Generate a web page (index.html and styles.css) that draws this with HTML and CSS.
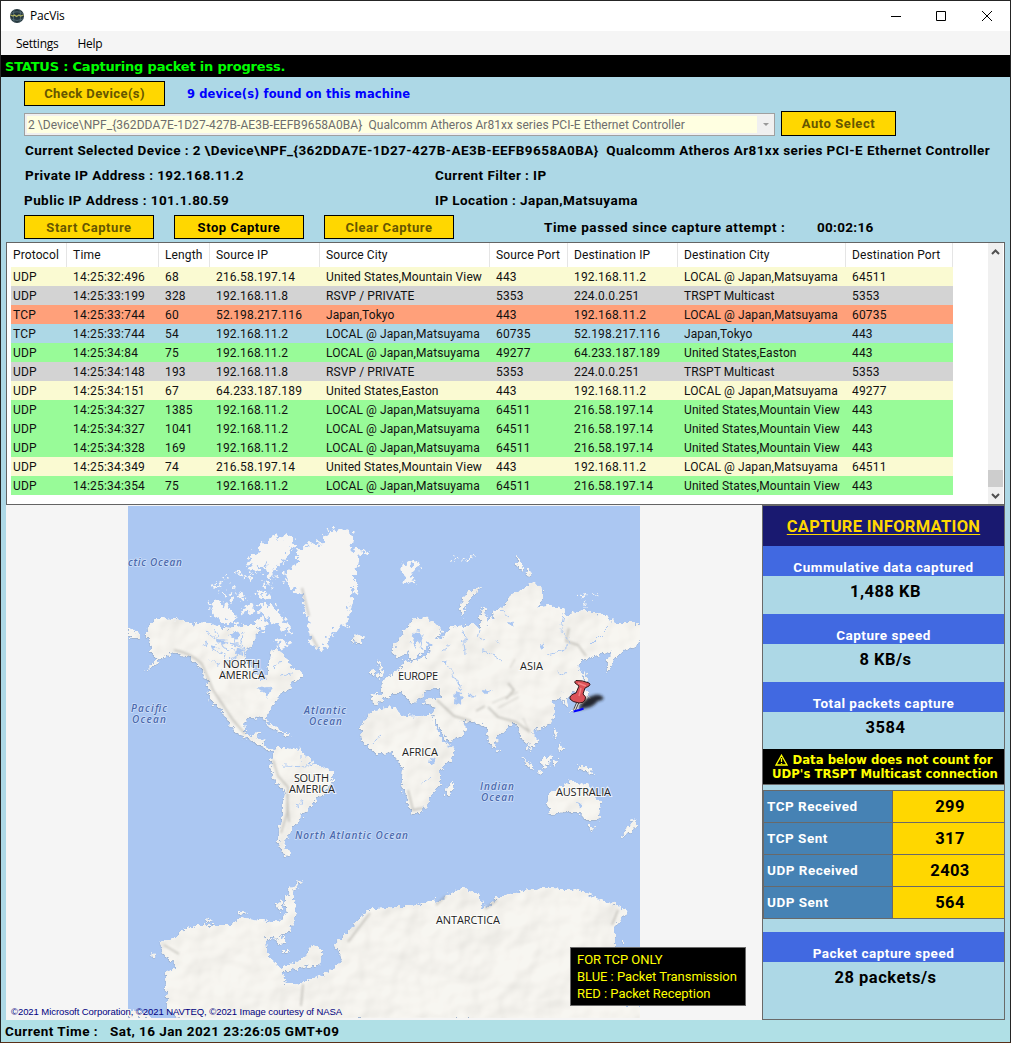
FILE: index.html
```html
<!DOCTYPE html>
<html lang="en">
<head>
<meta charset="utf-8">
<title>PacVis</title>
<link rel="stylesheet" href="styles.css">
</head>
<body>
<div class="window">
  <header class="titlebar">
    <svg class="logo" width="16" height="16" viewBox="0 0 16 16"><circle cx="8" cy="8" r="7" fill="#26383f"/><path d="M2 5.500Q8 2 14 5.500M2 11Q8 14 14 11M5 2Q3.500 8 5 14M11 2Q12.500 8 11 14" fill="none" stroke="#587078" stroke-width=".8"/><path d="M1.500 7l2.500 1 1.500-1 2 1.500L10 7l1.500 1 3-1" fill="none" stroke="#aeb05e" stroke-width="1.300"/></svg>
    <span class="app-name">PacVis</span>
    <svg class="controls" width="102" height="12" viewBox="0 0 102 12" fill="none" stroke="#000"><path d="M0 6.500h10M45.500 1.500h9v9h-9zM91 1l10 10M101 1L91 11"/></svg>
  </header>
  <nav class="menu"><span>Settings</span><span>Help</span></nav>
  <div class="status">STATUS : Capturing packet in progress.</div>

  <section class="controls-panel">
    <div class="row row-check">
      <button class="btn off wide">Check Device(s)</button>
      <span class="found">9 device(s) found on this machine</span>
    </div>
    <div class="row row-select">
      <div class="combo"><span class="combo-text">2 \Device\NPF_{362DDA7E-1D27-427B-AE3B-EEFB9658A0BA}&nbsp; Qualcomm Atheros Ar81xx series PCI-E Ethernet Controller</span><i class="caret"></i></div>
      <button class="btn off auto">Auto Select</button>
    </div>
    <div class="info device">Current Selected Device : 2 \Device\NPF_{362DDA7E-1D27-427B-AE3B-EEFB9658A0BA}&nbsp; Qualcomm Atheros Ar81xx series PCI-E Ethernet Controller</div>
    <div class="info pair"><span>Private IP Address : 192.168.11.2</span><span>Current Filter : IP</span></div>
    <div class="info pair second"><span>Public IP Address : 101.1.80.59</span><span>IP Location : Japan,Matsuyama</span></div>
    <div class="row row-capture">
      <button class="btn off">Start Capture</button>
      <button class="btn">Stop Capture</button>
      <button class="btn off">Clear Capture</button>
      <span class="elapsed-label">Time passed since capture attempt :</span><span class="elapsed">00:02:16</span>
    </div>
  </section>

  <section class="packets">
    <div class="grid">
      <div class="tr th"><span>Protocol</span><span>Time</span><span>Length</span><span>Source IP</span><span>Source City</span><span>Source Port</span><span>Destination IP</span><span>Destination City</span><span>Destination Port</span></div>
      <div class="tr cream"><span>UDP</span><span>14:25:32:496</span><span>68</span><span>216.58.197.14</span><span>United States,Mountain View</span><span>443</span><span>192.168.11.2</span><span>LOCAL @ Japan,Matsuyama</span><span>64511</span></div>
      <div class="tr gray"><span>UDP</span><span>14:25:33:199</span><span>328</span><span>192.168.11.8</span><span>RSVP / PRIVATE</span><span>5353</span><span>224.0.0.251</span><span>TRSPT Multicast</span><span>5353</span></div>
      <div class="tr salmon"><span>TCP</span><span>14:25:33:744</span><span>60</span><span>52.198.217.116</span><span>Japan,Tokyo</span><span>443</span><span>192.168.11.2</span><span>LOCAL @ Japan,Matsuyama</span><span>60735</span></div>
      <div class="tr blue"><span>TCP</span><span>14:25:33:744</span><span>54</span><span>192.168.11.2</span><span>LOCAL @ Japan,Matsuyama</span><span>60735</span><span>52.198.217.116</span><span>Japan,Tokyo</span><span>443</span></div>
      <div class="tr green"><span>UDP</span><span>14:25:34:84</span><span>75</span><span>192.168.11.2</span><span>LOCAL @ Japan,Matsuyama</span><span>49277</span><span>64.233.187.189</span><span>United States,Easton</span><span>443</span></div>
      <div class="tr gray"><span>UDP</span><span>14:25:34:148</span><span>193</span><span>192.168.11.8</span><span>RSVP / PRIVATE</span><span>5353</span><span>224.0.0.251</span><span>TRSPT Multicast</span><span>5353</span></div>
      <div class="tr cream"><span>UDP</span><span>14:25:34:151</span><span>67</span><span>64.233.187.189</span><span>United States,Easton</span><span>443</span><span>192.168.11.2</span><span>LOCAL @ Japan,Matsuyama</span><span>49277</span></div>
      <div class="tr green"><span>UDP</span><span>14:25:34:327</span><span>1385</span><span>192.168.11.2</span><span>LOCAL @ Japan,Matsuyama</span><span>64511</span><span>216.58.197.14</span><span>United States,Mountain View</span><span>443</span></div>
      <div class="tr green"><span>UDP</span><span>14:25:34:327</span><span>1041</span><span>192.168.11.2</span><span>LOCAL @ Japan,Matsuyama</span><span>64511</span><span>216.58.197.14</span><span>United States,Mountain View</span><span>443</span></div>
      <div class="tr green"><span>UDP</span><span>14:25:34:328</span><span>169</span><span>192.168.11.2</span><span>LOCAL @ Japan,Matsuyama</span><span>64511</span><span>216.58.197.14</span><span>United States,Mountain View</span><span>443</span></div>
      <div class="tr cream"><span>UDP</span><span>14:25:34:349</span><span>74</span><span>216.58.197.14</span><span>United States,Mountain View</span><span>443</span><span>192.168.11.2</span><span>LOCAL @ Japan,Matsuyama</span><span>64511</span></div>
      <div class="tr green"><span>UDP</span><span>14:25:34:354</span><span>75</span><span>192.168.11.2</span><span>LOCAL @ Japan,Matsuyama</span><span>64511</span><span>216.58.197.14</span><span>United States,Mountain View</span><span>443</span></div>
    </div>
    <div class="scroll">
      <svg width="9" height="6" viewBox="0 0 9 6"><path d="M1 5l3.500-3.500L8 5" fill="none" stroke="#505050" stroke-width="2"/></svg>
      <i class="thumb"></i>
      <svg width="9" height="6" viewBox="0 0 9 6"><path d="M1 1l3.500 3.500L8 1" fill="none" stroke="#505050" stroke-width="2"/></svg>
    </div>
  </section>

  <main class="lower">
    <section class="map-area">
      <svg class="map" width="512" height="512" viewBox="128 506 512 512">
        <defs>
          <filter id="coast" x="128" y="506" width="512" height="512" filterUnits="userSpaceOnUse" color-interpolation-filters="sRGB">
            <feTurbulence type="fractalNoise" baseFrequency=".24" numOctaves="3" seed="4" result="n"/>
            <feDisplacementMap in="SourceGraphic" in2="n" scale="8" xChannelSelector="R" yChannelSelector="G" result="land"/>
            <feTurbulence type="fractalNoise" baseFrequency=".025" numOctaves="3" seed="9" result="h"/>
            <feDiffuseLighting in="h" surfaceScale="5" diffuseConstant="1.100" lighting-color="#fff" result="lit"><feDistantLight azimuth="230" elevation="58"/></feDiffuseLighting>
            <feColorMatrix in="lit" type="matrix" values=".16 0 0 0 .81  0 .16 0 0 .807  0 0 .16 0 .795  0 0 0 1 0" result="tone"/>
            <feComposite in="tone" in2="land" operator="in" result="relief"/>
            <feBlend in="relief" in2="land" mode="multiply" result="body"/>
            <feDropShadow in="land" dx="-.3" dy=".6" stdDeviation=".6" flood-color="#8d8f90" flood-opacity=".55" result="edge"/>
            <feMerge><feMergeNode in="edge"/><feMergeNode in="body"/></feMerge>
          </filter>
          <filter id="arctic" x="128" y="506" width="512" height="170" filterUnits="userSpaceOnUse" color-interpolation-filters="sRGB">
            <feTurbulence type="fractalNoise" baseFrequency=".2" numOctaves="3" seed="12" result="n"/>
            <feDisplacementMap in="SourceGraphic" in2="n" scale="15" xChannelSelector="R" yChannelSelector="G"/>
          </filter>
          <filter id="rough" x="128" y="506" width="512" height="512" filterUnits="userSpaceOnUse">
            <feTurbulence type="fractalNoise" baseFrequency=".16" numOctaves="2" seed="7" result="n"/>
            <feDisplacementMap in="SourceGraphic" in2="n" scale="9" xChannelSelector="R" yChannelSelector="G"/>
          </filter>
          <filter id="soft"><feGaussianBlur stdDeviation="1.200"/></filter>
          <filter id="shade" x="-30%" y="-30%" width="160%" height="160%"><feGaussianBlur stdDeviation="1.500"/></filter>
        </defs>
        <rect x="128" y="506" width="512" height="512" fill="#abc7f2"/>
        <g fill="#fffefc" filter="url(#coast)">
          <path d="M148 627L157 618 183 620 193 625 203 622 220 627 230 628 247 625 257 625 258 633 253 643 246 651 246 662 254 672 262 681 268 681 267 670 270 661 272 650 282 651 287 660 292 668 302 671 303 677 290 683 291 689 280 693 275 703 266 714 268 724 263 717 248 718 244 723 245 733 252 737 257 731 260 732 256 739 264 741 264 746 276 751 270 752 260 745 247 739 237 733 230 725 220 708 210 700 208 683 200 667 190 657 173 652 163 657 145 672 157 658 150 650 152 643 147 637Z"/>
          <path d="M353 638L359 635 364 638 359 643 354 642ZM128 627L137 632 139 638 131 638 128 634Z"/>
          <path d="M277 747L293 748 303 753 312 760 313 765 323 767 334 772 332 780 323 795 315 800 307 812 301 813 303 818 295 823 290 833 284 843 290 855 282 852 278 840 281 820 285 793 273 777 270 767 272 757Z"/>
          <path d="M266 723L276 727 284 733 278 731 268 726ZM285 733L292 735 286 736ZM297 747L300 749 298 751Z"/>
          <path d="M371 700L372 695 381 694 382 682 393 673 403 667 405 660 410 664 423 658 431 652 428 646 421 653 414 660 409 660 410 650 404 655 396 657 392 650 403 633 413 620 425 617 437 625 442 633 435 636 441 640 450 628 460 627 473 623 480 630 480 610 485 607 488 627 493 613 507 603 510 595 527 588 532 582 543 588 543 600 535 607 550 605 563 610 565 616 583 610 610 617 613 623 640 623 640 637 637 645 623 650 615 658 607 673 607 660 612 650 597 655 583 660 577 667 583 677 580 687 572 693 567 700 568 707 565 706 562 698 552 700 555 710 553 720 542 728 532 730 538 742 532 747 527 740 531 752 526 744 519 732 517 722 507 727 497 737 494 749 488 737 487 727 478 723 460 720 468 730 460 737 448 742 437 723 433 715 435 707 423 703 427 698 442 698 438 689 429 688 424 694 417 700 413 703 403 693 393 693 382 700 375 705Z"/>
          <path d="M375 710L397 707 400 715 410 717 432 715 435 727 445 745 456 747 450 760 440 770 440 785 430 795 428 803 420 813 412 813 405 793 402 783 403 770 398 760 393 752 375 753 362 740 361 727 367 717ZM447 787L453 781 453 788 450 797 446 797Z"/>
          <path d="M547 795L560 788 567 783 573 780 580 787 587 782 592 793 601 803 598 820 585 820 578 812 563 812 550 814ZM590 826L595 827 592 831ZM633 819L637 824 631 831 622 837 626 830 631 826ZM577 766L586 766 595 774 588 773ZM540 762L550 755 549 765 543 767ZM522 756L528 762 534 769 529 767ZM536 771L543 772 542 774ZM554 727L557 734 555 738ZM560 743L563 751 558 749ZM553 760L558 759 555 767ZM583 688L589 694 586 702 577 710 569 712 578 705ZM585 670L588 678 587 688 584 681ZM497 749L499 752 496 752Z"/>
          <path d="M462 617L460 605 468 592 482 587 470 598 464 609ZM377 658L381 666 384 675 377 678 380 669ZM372 669L376 671 374 675 371 675ZM517 555L521 563 524 570 517 566ZM526 569L532 572 529 577Z"/>
          <path d="M180 1018L168 1010 165 973 178 967 163 953 160 942 175 938 183 930 200 925 230 925 243 918 260 920 280 922 287 913 285 900 292 887 302 880 293 892 296 913 290 930 280 937 265 938 268 957 280 968 300 960 313 945 322 950 320 965 297 968 282 973 285 983 300 985 303 982 323 975 342 962 340 950 333 947 347 933 368 910 397 907 410 907 433 900 437 903 460 888 480 895 483 910 497 898 517 892 543 888 580 890 600 900 617 905 627 912 615 927 615 947 619 980 622 1005 641 1005 641 1020 180 1020ZM276 939L286 937 286 943 279 945ZM151 951L156 957 152 958ZM128 1008L145 1012 151 1018 128 1018ZM281 950L289 950 284 953ZM204 919L213 921 207 922ZM240 912L246 913 242 915ZM282 850L290 854 286 856ZM620 942L624 942 622 944ZM277 904L282 901 282 912 278 908Z"/>
        </g>
        <g fill="#f6f5f3" filter="url(#arctic)">
          <path d="M284 575L297 562 297 551 307 543 320 544 327 533 338 528 350 533 353 538 350 548 367 550 360 557 355 570 355 587 350 610 348 623 333 633 322 650 313 647 310 637 305 610 302 593 287 585Z"/>
          <path d="M248 563L257 550 273 535 293 537 294 545 287 557 276 569 272 580 265 575 267 563 258 573 250 571ZM258 603L273 605 283 617 292 630 287 634 276 623 263 616ZM207 602L217 600 230 608 237 623 223 622 210 612ZM276 637L290 645 286 648 276 643ZM247 603L254 608 250 615 242 612ZM257 618L266 620 265 631 257 628ZM255 592L270 594 268 599 257 597ZM236 593L248 596 242 600ZM219 591L232 595 228 600ZM242 577L254 575 252 580ZM260 583L272 585 266 589ZM236 570L243 572 238 576ZM214 583L222 585 216 589ZM223 577L228 577 225 580ZM230 586L236 585 235 589Z"/>
          <path d="M401 567L409 563 421 564 419 569 411 571 415 581 406 583ZM579 592L589 595 582 597ZM593 594L597 596 593 597ZM450 559L457 557 453 561ZM464 558L476 555 468 562ZM583 603L587 604 585 606Z"/>
        </g>
        <g fill="none" stroke="#8d8b83" opacity=".4" filter="url(#soft)" stroke-width="2">
          <path d="M174 650q17 3 28 14l11 26 20 30 12 14M273 760l5 16 10 11-1 26-6 20M287 794l2 28M437 700l17 16 17 5M488 707l10 10 18 5 14 10M508 683l6 7-8 9M476 711l9-5M569 628l-3 13 12 4 8 11M408 790l5 20 10-2M164 945l15 9M348 942l22-29M303 984l-2 22M436 905l10-9M485 909l12-9M618 910l-6 15M311 635l7 13M302 588l7 28"/>
          <path d="M492 703l26-11M498 708l21-11M515 659l-5 9M523 718l6 13" stroke-width="1"/>
        </g>
        <g fill="none" stroke="#abc7f2" stroke-width="1" filter="url(#rough)">
          <path d="M285 765l24 1 5-3M295 803l6 5M303 799l-4 6M301 754v6M313 760l-4 4M372 743l10-8M421 785l10-8M480 630l-2 7 7 4M483 651l9 2 10 7M564 614l-3 15 10 14-10 9-15 3M556 671l9 5M590 645l18-18M463 630l2 25M448 665l14 25M230 643l14 5 2 9M205 631l10 8 8 1M215 632l8 16 12 1M212 651l10 3M224 655l10 8M222 671l8 3M244 632l-4 12M258 634l-2 11M210 659l10 6M495 640l5 3M500 610l8 6M560 690l5 3M234 630l3 13M218 643l24 1M241 653l-12 8M256 660l-8-3M282 660l-8 9M292 674l-12 2M208 640l-4 7M467 638l-7 3M424 632l-5 8 3 10M450 645l-8 6"/>
        </g>
        <g fill="#abc7f2" filter="url(#rough)">
          <path d="M256 688l10-3 6 5-6 8-3-7zM217 640l9 1-3 5zM229 634l7-2 4 6-6 1zM211 645l7 2-5 4zM430 759l5 1-2 5h-4zM508 621l8 1-4 5zM538 643l7 1-4 5zM456 690l6 3-1 12-6-2zM468 693l6 1-4 4zM578 803l5 2-4 3zM484 690l7 1-5 3zM443 661l6 1-5 4zM237 648l8 2-3 6-6-3zM414 633l7-4-1 10-6 8-2-6zM425 642l9 3-5 3z"/>
        </g>
        <g class="land-label">
          <text x="223" y="668" textLength="37">NORTH</text><text x="219" y="679" textLength="46">AMERICA</text>
          <text x="294" y="782" textLength="35">SOUTH</text><text x="289" y="793" textLength="46">AMERICA</text>
          <text x="398" y="680" textLength="40">EUROPE</text><text x="520" y="670" textLength="23">ASIA</text>
          <text x="402" y="756" textLength="36">AFRICA</text><text x="556" y="796" textLength="55">AUSTRALIA</text>
          <text x="436" y="924" textLength="64">ANTARCTICA</text>
        </g>
        <g class="sea-label">
          <text x="128" y="566" textLength="54">ctic Ocean</text>
          <text x="131" y="712" textLength="36">Pacific</text><text x="132" y="723" textLength="34">Ocean</text>
          <text x="304" y="714" textLength="42">Atlantic</text><text x="309" y="725" textLength="33">Ocean</text>
          <text x="480" y="790" textLength="34">Indian</text><text x="481" y="801" textLength="33">Ocean</text>
          <text x="295" y="839" textLength="113">North Atlantic Ocean</text>
        </g>
        <path d="M578 710Q583 698 592 696q7-3 11 1 2 3-5 4-6 7-12 7z" fill="#14181e" opacity=".9" filter="url(#shade)"/>
        <path d="M578 702l-3.500 8" stroke="#333" stroke-width="3"/><path d="M578 702l-3.500 8" stroke="#ddd" stroke-width="1.300"/>
        <path d="M576 680.500q6-.5 13 2.500 2 1 0 3l-4 2-2 6q4 3 2 6-1 3-6 3-7-1-9-4-1-4 6-6l3-7-4-3q-1-1 1-2.500z" fill="#dc5157" stroke="#34191b"/>
        <path d="M578 683l8 3M581 688l-2 8" stroke="#f28284" stroke-width="1.500"/>
        <path d="M573.500 711.500l6-1.500 4-1.500" fill="none" stroke="#00f" stroke-width="2"/>
      </svg>
      <span class="copyright">©2021 Microsoft Corporation, ©2021 NAVTEQ, ©2021 Image courtesy of NASA</span>
      <div class="legend"><p>FOR TCP ONLY</p><p>BLUE : Packet Transmission</p><p>RED : Packet Reception</p></div>
    </section>
    <aside class="side">
      <h2>CAPTURE INFORMATION</h2>
      <h3>Cummulative data captured</h3><div class="value">1,488 KB</div>
      <h3>Capture speed</h3><div class="value">8 KB/s</div>
      <h3>Total packets capture</h3><div class="value short">3584</div>
      <div class="notice"><div class="notice-top"><svg width="13" height="12" viewBox="0 0 13 12"><path d="M6.500 1.200L12 11H1zM6.500 4v4M6.500 9v1" fill="none" stroke="#ff0" stroke-width="1.300"/></svg><span>Data below does not count for</span></div><div class="notice-bottom">UDP's TRSPT Multicast connection</div></div>
      <div class="counts">
        <b>TCP Received</b><em>299</em><b>TCP Sent</b><em>317</em><b>UDP Received</b><em>2403</em><b>UDP Sent</b><em>564</em>
      </div>
      <h3>Packet capture speed</h3><div class="value">28 packets/s</div>
    </aside>
  </main>
  <footer class="foot"><span>Current Time :</span><span>Sat, 16 Jan 2021 23:26:05 GMT+09</span></footer>
</div>
</body>
</html>
```
FILE: styles.css
```css
* { box-sizing: border-box; }
body { margin: 0; font-family: Roboto, sans-serif; color: #000; background: #add8e6; }
.window { width: 1011px; height: 1043px; border: 1px solid #252525; border-bottom-color: #5a3018; display: flex; flex-direction: column; overflow: hidden; white-space: nowrap; }
.titlebar { height: 30px; background: #fff; display: flex; align-items: center; padding: 0 17px 1px 8px; }
.app-name { font: 12px "Open Sans", sans-serif; margin-left: 5px; letter-spacing: -.15px; }
.controls { margin-left: auto; }
.menu { height: 24px; background: #f5f5f5; display: flex; align-items: center; gap: 19px; padding-left: 15px; font: 12px "Open Sans", sans-serif; letter-spacing: -.25px; }
.status { height: 22px; background: #000; color: #0f0; font: bold 13px/23px "DejaVu Sans", sans-serif; letter-spacing: -.2px; padding-left: 4px; }

.controls-panel { height: 165px; }
.row { display: flex; align-items: center; }
.btn { width: 130px; height: 25px; padding: 0; border: 1px solid #000; border-radius: 0; background: #ffd700; color: #000; font: bold 13px Roboto, sans-serif; letter-spacing: .55px; }
.btn.off { color: #665600; }
.row-check { padding: 4px 0 0 23px; }
.btn.wide { width: 141px; letter-spacing: .4px; }
.found { font: bold 11.5px "DejaVu Sans", sans-serif; color: #00f; margin-left: 22px; letter-spacing: .09px; }
.row-select { padding: 5px 0 0 23px; align-items: flex-end; }
.combo { width: 751px; height: 23px; border: 1px solid #a0a0a0; background: #f0f0f0; padding: 2px; display: flex; align-items: center; }
.combo-text { width: 730px; height: 17px; background: #ffffe1; color: #6d6d6d; font-size: 12px; line-height: 19px; letter-spacing: .06px; padding-left: 1px; }
.caret { margin-left: 6px; border: 3px solid transparent; border-top: 3px solid #999; border-bottom: 0; }
.auto { width: 115px; margin-left: 6px; }
.info { height: 25px; font-size: 13.5px; font-weight: bold; line-height: 25px; letter-spacing: .43px; padding-left: 24px; }
.device { margin-top: 2px; }
.pair { display: grid; grid-template-columns: 410px 1fr; }
.second { padding-left: 23px; grid-template-columns: 411px 1fr; }
.row-capture { padding: 2px 0 0 23px; gap: 20px; }
.row-capture .btn { height: 24px; }
.elapsed-label, .elapsed { font-size: 13.5px; font-weight: bold; letter-spacing: .58px; }
.elapsed { letter-spacing: .3px; }
.elapsed-label { margin-left: 70px; width: 253px; }

.packets { height: 263px; width: 999px; margin-left: 5px; border: 1px solid #646464; background: #fff; display: flex; justify-content: space-between; padding-right: 1px; }
.grid { width: 946px; padding-left: 4px; }
.tr { display: grid; grid-template-columns: 56px 92px 51px 110px 170px 78px 110px 168px 107px; height: 19px; font-size: 12px; line-height: 20px; letter-spacing: .17px; color: #111; }
.tr span { padding-left: 6px; }
.tr span:nth-child(2) { letter-spacing: .22px; }
.tr span:nth-child(5), .tr span:nth-child(8) { letter-spacing: .1px; }
.tr span:first-child { padding-left: 2px; }
.tr.th { height: 24px; line-height: 24px; letter-spacing: .12px; }
.th span { border-right: 1px solid #e5e5e5; }
.cream { background: #fafad2; }
.gray { background: #d3d3d3; }
.salmon { background: #ffa07a; }
.blue { background: #add8e6; }
.green { background: #98fb98; }
.scroll { width: 15px; background: #f0f0f0; display: flex; flex-direction: column; align-items: center; padding: 6px 0 5px; }
.thumb { width: 15px; height: 17px; background: #cdcdcd; margin: auto 0 6px; }

.lower { height: 515px; display: flex; margin-left: 5px; }
.map-area { position: relative; width: 756px; background: #f5f5f5; padding: 1px 0 0 122px; }
.map { display: block; }
.land-label { font: 11px "Open Sans", sans-serif; fill: #222; stroke: #fff; stroke-width: 2px; stroke-opacity: .7; paint-order: stroke; }
.sea-label { font: italic 600 10px "Open Sans", sans-serif; fill: #4a69ad; stroke: #dce8fb; stroke-width: 1.500px; stroke-opacity: .75; paint-order: stroke; }
.copyright { position: absolute; left: 5px; bottom: 3px; font: 9.500px "Liberation Sans", sans-serif; letter-spacing: -.07px; color: #000080; }
.legend { position: absolute; left: 564px; top: 442px; width: 176px; height: 59px; border: 1px solid #696969; background: #000; color: #ff0; padding: 3px 6px; }
.legend p { margin: 0; font-size: 13px; line-height: 17px; letter-spacing: -.04px; }

.side { width: 243px; border: 1px solid #696969; background: #add8e6; text-align: center; }
.side h2 { height: 40px; margin: 0; background: #191970; color: #ffd700; font-size: 16.5px; font-weight: bold; line-height: 41px; letter-spacing: .3px; text-decoration: underline; text-decoration-thickness: 1px; text-underline-offset: 2px; }
.side h3 { height: 30px; margin: 0; background: #4169e1; color: #fff; font-size: 13.5px; line-height: 43px; letter-spacing: .52px; }
.value { height: 38px; font-size: 16.5px; font-weight: bold; line-height: 31px; letter-spacing: .5px; padding-left: 4px; }
.value.short { height: 37px; }
.notice { height: 36px; background: #000; border-bottom: 1px solid #696969; color: #ff0; font: bold 13px/14px "DejaVu Sans Condensed", "DejaVu Sans", sans-serif; padding-top: 4px; }
.notice-top { display: flex; justify-content: center; gap: 5px; align-items: center; height: 14px; }
.notice-bottom { padding-left: 3px; }
.counts { margin: 5px 0 13px; padding: 1px 0 1px 1px; background: #696969; display: grid; grid-template-columns: 128px 111px; column-gap: 1px; grid-auto-rows: 31px; row-gap: 1px; }
.counts b, .counts em { font-style: normal; font-weight: bold; line-height: 31px; }
.counts b { background: #4682b4; color: #fff; text-align: left; font-size: 13.5px; padding-left: 3px; letter-spacing: .5px; }
.counts em { background: #ffd700; font-size: 16.5px; letter-spacing: .4px; padding-left: 3px; }
.foot { height: 22px; background: #b0e0e6; font-size: 13.5px; font-weight: bold; line-height: 23px; letter-spacing: .45px; padding-left: 4px; display: flex; gap: 12px; }
```
